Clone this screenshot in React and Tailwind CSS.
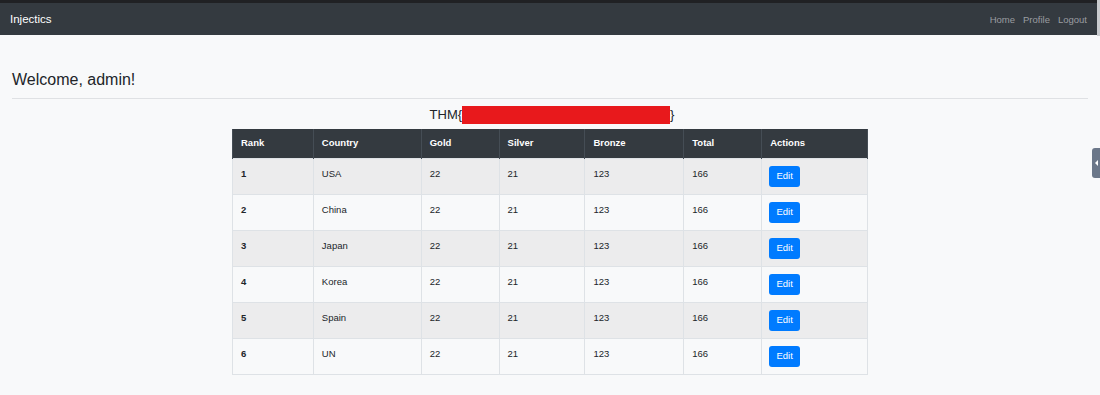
import React from 'react';

const rows = [
  { rank: 1, country: 'USA' },
  { rank: 2, country: 'China' },
  { rank: 3, country: 'Japan' },
  { rank: 4, country: 'Korea' },
  { rank: 5, country: 'Spain' },
  { rank: 6, country: 'UN' },
];

const cols = [
  { label: 'Rank', w: 'w-[81px]' },
  { label: 'Country', w: 'w-[108px]' },
  { label: 'Gold', w: 'w-[78px]' },
  { label: 'Silver', w: 'w-[86px]' },
  { label: 'Bronze', w: 'w-[99px]' },
  { label: 'Total', w: 'w-[78px]' },
  { label: 'Actions', w: 'w-[106px]' },
];

export default function App() {
  return (
    <div className="relative h-[395px] overflow-hidden bg-[#f8f9fa] font-['Liberation_Sans',Arial,sans-serif] text-[#212529]">
      <div className="h-[3px] bg-[#202124]" />
      {/* Navbar */}
      <nav className="flex h-[32px] items-center justify-between bg-[#343a40] pl-[10px] pr-[13px] pt-[2px]">
        <span className="text-[11.5px] text-white">Injectics</span>
        <div className="flex gap-[8px] text-[9.5px] text-[#9a9da1]">
          <a href="#">Home</a>
          <a href="#">Profile</a>
          <a href="#">Logout</a>
        </div>
      </nav>
      <div className="absolute right-0 top-0 h-[36px] w-[3px] bg-[#c9cbce]" />

      <div className="px-[12px]">
        <h1 className="mt-[34px] text-[16px] leading-[22px]">Welcome, admin!</h1>
        <hr className="mt-[7px] border-[#dfe1e4]" />
      </div>

      <div className="mt-[7px] flex justify-center">
        <div className="ml-[4px] flex items-center text-[13px] leading-[18px]">
          <span>THM{'{'}</span>
          <span className="inline-block h-[18px] w-[208px] bg-[#e8191c]" />
          <span>{'}'}</span>
        </div>
      </div>

      <div className="mt-[5px] flex justify-center">
        <table className="w-[636px] border-collapse text-[9.5px]">
          <thead>
            <tr className="h-[29px] bg-[#343a40] text-white">
              {cols.map((c) => (
                <th key={c.label} className={`${c.w} border-x border-[#454d55] px-[8px] text-left font-bold`}>
                  {c.label}
                </th>
              ))}
            </tr>
          </thead>
          <tbody>
            {rows.map((r, i) => (
              <tr key={r.rank} className={`h-[36px] ${i % 2 === 0 ? 'bg-[#ececed]' : 'bg-[#f8f9fa]'}`}>
                <td className="border border-[#dee2e6] px-[8px] pt-[8px] align-top font-bold">{r.rank}</td>
                <td className="border border-[#dee2e6] px-[8px] pt-[8px] align-top">{r.country}</td>
                <td className="border border-[#dee2e6] px-[8px] pt-[8px] align-top">22</td>
                <td className="border border-[#dee2e6] px-[8px] pt-[8px] align-top">21</td>
                <td className="border border-[#dee2e6] px-[8px] pt-[8px] align-top">123</td>
                <td className="border border-[#dee2e6] px-[8px] pt-[8px] align-top">166</td>
                <td className="border border-[#dee2e6] px-[7px] py-[7px] align-top">
                  <button className="h-[21px] w-[31px] rounded-[3px] bg-[#007bff] text-[9.5px] text-white">Edit</button>
                </td>
              </tr>
            ))}
          </tbody>
        </table>
      </div>

      {/* side tab */}
      <div className="absolute right-0 top-[148px] flex h-[30px] w-[8px] items-center justify-center rounded-l-[3px] bg-[#6b7789]">
        <span className="h-0 w-0 border-y-[3px] border-r-[3px] border-y-transparent border-r-white" />
      </div>
    </div>
  );
}
